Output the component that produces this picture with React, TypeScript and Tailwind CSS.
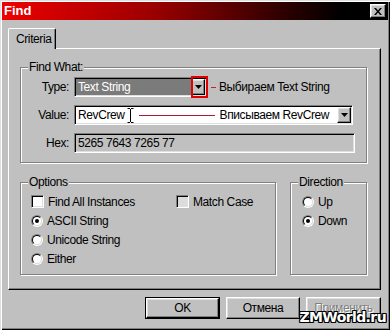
const font = "font-['Liberation_Sans',Arial,sans-serif]";

// Win9x 3D edges
const sunken =
  "border border-t-[#808080] border-l-[#808080] border-b-white border-r-white shadow-[inset_1px_1px_0_#000,inset_-1px_-1px_0_#dfdfdf]";
const raised =
  "border border-t-white border-l-white border-b-black border-r-black shadow-[inset_-1px_-1px_0_#808080,inset_1px_1px_0_#dfdfdf]";
const etched = "border border-[#808080] shadow-[inset_1px_1px_0_#fff,1px_1px_0_#fff]";

function DropButton({ className = "" }: { className?: string }) {
  return (
    <div className={`flex h-[16px] w-[14px] items-center justify-center bg-[#c0c0c0] ${raised} ${className}`}>
      <svg width="7" height="4" viewBox="0 0 7 4">
        <path d="M0 0h7L3.5 4z" fill="#000" />
      </svg>
    </div>
  );
}

function GroupBox({
  title,
  className,
  children,
}: {
  title: string;
  className: string;
  children: React.ReactNode;
}) {
  return (
    <div className={`relative ${etched} ${className}`}>
      <span className="absolute left-[7px] top-[-8px] bg-[#c0c0c0] px-[1px] leading-[14px]">{title}</span>
      {children}
    </div>
  );
}

function Checkbox({ label, fill = "bg-white" }: { label: string; fill?: string }) {
  return (
    <div className="flex h-[19px] items-center gap-[4px]">
      <div className={`h-[13px] w-[13px] ${fill} ${sunken}`} />
      <span>{label}</span>
    </div>
  );
}

function Radio({ label, checked = false }: { label: string; checked?: boolean }) {
  return (
    <div className="flex h-[19px] items-center gap-[4px]">
      <div className="flex h-[12px] w-[12px] rounded-full border border-t-[#808080] border-l-[#808080] border-b-white border-r-white">
        <div className="flex flex-1 items-center justify-center rounded-full border border-t-black border-l-black border-b-[#dfdfdf] border-r-[#dfdfdf] bg-white">
          {checked && <div className="h-[4px] w-[4px] rounded-full bg-black" />}
        </div>
      </div>
      <span>{label}</span>
    </div>
  );
}

function Button({
  children,
  width,
  primary = false,
  disabled = false,
}: {
  children: React.ReactNode;
  width: string;
  primary?: boolean;
  disabled?: boolean;
}) {
  return (
    <div className={`${width} h-[22px] ${primary ? "border border-black" : ""}`}>
      <div
        className={`flex h-full w-full items-center justify-center bg-[#c0c0c0] ${raised} ${
          disabled ? "text-[#808080] [text-shadow:1px_1px_0_#fff]" : "text-black"
        }`}
      >
        {children}
      </div>
    </div>
  );
}

export default function App() {
  return (
    <div
      className={`relative flex h-[330px] w-[390px] flex-col overflow-hidden bg-[#c0c0c0] p-[2px] text-[12px] tracking-[-0.4px] text-black ${font} shadow-[inset_1px_1px_0_#dfdfdf,inset_2px_2px_0_#fff,inset_-1px_-1px_0_#000,inset_-2px_-2px_0_#808080]`}
    >
      {/* Title bar */}
      <div className="flex h-[18px] items-center justify-between bg-[linear-gradient(to_right,#ee0000,#990000_40%,#300000_72%,#000_88%)] pl-[2px] pr-[2px]">
        <span className="text-[13px] font-bold tracking-normal text-white">Find</span>
        <div className={`flex h-[14px] w-[16px] items-center justify-center bg-[#c0c0c0] ${raised}`}>
          <svg width="8" height="7" viewBox="0 0 8 7">
            <path d="M0 0h2l2 2.5L6 0h2L5 3.5 8 7H6L4 4.5 2 7H0l3-3.5z" fill="#000" />
          </svg>
        </div>
      </div>

      {/* Tabs */}
      <div className="ml-[6px] mt-[8px] flex">
        <div className="relative z-10 -mb-[1px] flex h-[21px] w-[48px] items-center rounded-t-[2px] border-l border-t border-r border-l-white border-t-white border-r-black bg-[#c0c0c0] pl-[7px] shadow-[inset_-1px_0_0_#808080]">
          Criteria
        </div>
      </div>

      <div className="ml-[6px] flex h-[242px] w-[373px] flex-col border border-t-white border-l-white border-b-black border-r-black pl-[11px] pt-[18px] shadow-[inset_-1px_-1px_0_#808080]">
        {/* Find What */}
        <GroupBox title="Find What:" className="flex h-[96px] w-[347px] flex-col gap-[8px] pt-[9px]">
          <div className="flex h-[20px] items-center">
            <span className="w-[48px] text-right">Type:</span>
            <div className={`relative ml-[5px] flex h-[20px] w-[133px] items-center ${sunken} bg-[#7b7b7b] pl-[3px]`}>
              <span className="flex-1 text-white">Text String</span>
              <DropButton className="mr-[1px]" />
              <div className="absolute right-[-2px] top-[-2px] h-[22px] w-[17px] border-2 border-[#e00000]" />
            </div>
            <div className="ml-[4px] h-[1px] w-[5px] bg-[#d02020]" />
            <span className="ml-[3px]">Выбираем Text String</span>
          </div>

          <div className="flex h-[20px] items-center">
            <span className="w-[48px] text-right">Value:</span>
            <div className={`ml-[5px] flex h-[20px] w-[279px] items-center bg-white ${sunken} pl-[3px]`}>
              <span>RevCrew</span>
              <svg width="7" height="15" viewBox="0 0 7 15" className="ml-[2px]">
                <path d="M0.5 0.5h2.5M4 0.5h2.5M3.5 1v13M0.5 14.5h2.5M4 14.5h2.5" stroke="#000" strokeWidth="1" fill="none" />
              </svg>
              <div className="ml-[5px] h-[1px] w-[76px] bg-[#b01838]" />
              <span className="ml-[5px] flex-1">Вписываем RevCrew</span>
              <DropButton className="mr-[1px]" />
            </div>
          </div>

          <div className="flex h-[20px] items-center">
            <span className="w-[48px] text-right">Hex:</span>
            <div className={`ml-[5px] flex h-[20px] w-[281px] items-center bg-[#c0c0c0] ${sunken} pl-[3px]`}>
              5265 7643 7265 77
            </div>
          </div>
        </GroupBox>

        <div className="mt-[19px] flex gap-[14px]">
          <GroupBox title="Options" className="h-[93px] w-[256px] pl-[10px] pt-[9px]">
            <div className="grid grid-cols-[145px_1fr]">
              <Checkbox label="Find All Instances" />
              <Checkbox label="Match Case" fill="bg-[#dcdcdc]" />
            </div>
            <Radio label="ASCII String" checked />
            <Radio label="Unicode String" />
            <Radio label="Either" />
          </GroupBox>

          <GroupBox title="Direction" className="h-[93px] w-[77px] pl-[11px] pt-[9px]">
            <Radio label="Up" />
            <Radio label="Down" checked />
          </GroupBox>
        </div>
      </div>

      {/* Buttons */}
      <div className="mt-[7px] flex justify-end gap-[6px] pr-[7px]">
        <Button width="w-[75px]" primary>
          OK
        </Button>
        <Button width="w-[74px]">Отмена</Button>
        <Button width="w-[75px]" disabled>
          Применить
        </Button>
      </div>

      <span className="absolute bottom-[2px] right-[4px] font-['DejaVu_Sans',sans-serif] text-[14px] font-bold tracking-[-0.6px] text-white [text-shadow:1px_1px_0_#000,-1px_-1px_0_#000,1px_-1px_0_#000,-1px_1px_0_#000,0_1px_0_#000,0_-1px_0_#000,1px_0_0_#000,-1px_0_0_#000]">
        ZMWorld.ru
      </span>
    </div>
  );
}
